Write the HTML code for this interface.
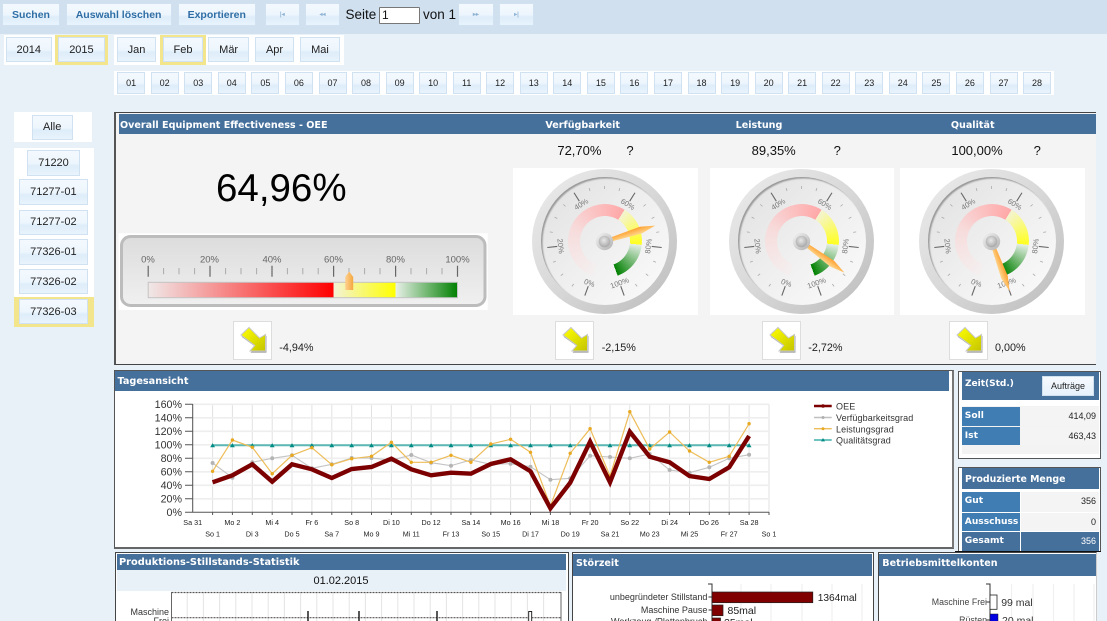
<!DOCTYPE html>
<html><head><meta charset="utf-8"><title>OEE</title>
<style>
html,body{margin:0;padding:0;width:1107px;height:621px;overflow:hidden;background:#e8f0f8;font-family:"Liberation Sans",sans-serif}
#p{position:relative;width:1107px;height:621px;overflow:hidden}
.a{position:absolute;box-sizing:border-box}
.w{position:absolute;background:#fff}
.hl{position:absolute;background:#f3e58b}
.b{position:absolute;box-sizing:border-box;display:flex;align-items:center;justify-content:center;border:1px solid #d0e2f2;background:linear-gradient(#f3f9fe 0,#eef6fd 50%,#deedfa 62%,#e8f3fc 100%);color:#222;font-size:11px;white-space:nowrap}
.n{font-weight:bold;color:#2f6ea5;font-size:10.5px}
.d{font-size:9px;width:28px;top:72px;height:21.5px}
.t{position:absolute;white-space:nowrap;line-height:14px;height:14px}
.c{transform:translateX(-50%)}
.h{position:absolute;background:#46709c}
.tt{position:absolute;white-space:nowrap;line-height:14px;height:14px;color:#fff;font:bold 9.6px/14px "DejaVu Sans",sans-serif}
.v{font-size:13px;color:#111}
.sm{font-size:10.8px;color:#222}
.ar{position:absolute;box-sizing:border-box;width:39px;height:39px;top:321px;background:#fff;border:1px solid #ddd}
.ar svg{position:absolute;left:0;top:0}
.g{position:absolute;width:145px;height:145px;top:168.8px;border-radius:50%;background:linear-gradient(135deg,#ececec 0,#d8d8d8 50%,#bcbcbc 100%)}
.f{position:absolute;left:8.5px;top:8.5px;width:128px;height:128px;border-radius:50%;background:linear-gradient(135deg,#e0e0e0 0,#efefef 50%,#fbfbfb 100%);box-shadow:inset 1.5px 1.5px 1.5px #999}
.r{position:absolute;left:35.5px;top:35.5px;width:74px;height:74px;border-radius:50%;background:conic-gradient(from -160deg,#f4efef 0deg,#f7dcdc 90deg,#ffa8a8 192deg,#f4f4d2 192deg,#ffff20 256deg,#e6efe6 256deg,#008000 320deg,transparent 320deg);-webkit-mask:radial-gradient(circle closest-side,transparent 67%,#000 68%);mask:radial-gradient(circle closest-side,transparent 67%,#000 68%)}
.g svg{position:absolute;left:0;top:0}
.g text{font-size:7.5px;fill:#777;text-anchor:middle}
.lab{position:absolute;box-sizing:border-box;left:962.3px;width:58px;background:#3f7db3;color:#fff;font:bold 9.1px/19px "DejaVu Sans",sans-serif;padding-left:2.5px;white-space:nowrap;overflow:hidden}
.val{position:absolute;box-sizing:border-box;left:1021px;width:78px;background:#f4f4f4;color:#222;font-size:9px;line-height:19px;text-align:right;padding-right:3px}
svg text{font-family:"Liberation Sans",sans-serif}
</style></head><body><div id="p">

<div class="a" style="left:0;top:0;width:1107px;height:34px;background:#d0e0ef"></div>
<div class="b n" style="left:2px;top:3px;width:58px;height:23px">Suchen</div>
<div class="b n" style="left:65.6px;top:3px;width:106px;height:23px">Auswahl löschen</div>
<div class="b n" style="left:177.5px;top:3px;width:78.5px;height:23px">Exportieren</div>
<div class="b n" style="left:264.5px;top:3px;width:35.5px;height:23px;font-size:6px;color:#8fb4d4">|◂</div>
<div class="b n" style="left:305px;top:3px;width:35px;height:23px;font-size:6px;color:#8fb4d4">◂◂</div>
<div class="t" style="left:345.5px;top:7.5px;font-size:13.5px;color:#111">Seite</div>
<div class="a" style="left:379px;top:7px;width:40.5px;height:17px;background:#fff;border:1px solid #777;border-radius:1px;font-size:12px;line-height:15px;padding-left:2px;color:#111">1</div>
<div class="t" style="left:423px;top:7.5px;font-size:13.5px;color:#111">von 1</div>
<div class="b n" style="left:457.7px;top:3px;width:36.3px;height:23px;font-size:6px;color:#8fb4d4">▸▸</div>
<div class="b n" style="left:499px;top:3px;width:35px;height:23px;font-size:6px;color:#8fb4d4">▸|</div>

<div class="w" style="left:3.5px;top:34.7px;width:104.5px;height:30.3px"></div>
<div class="hl" style="left:55.4px;top:35px;width:52.6px;height:30px"></div>
<div class="b" style="left:6px;top:37.3px;width:45.6px;height:25px">2014</div>
<div class="b" style="left:57.9px;top:37.3px;width:47.1px;height:25px">2015</div>

<div class="w" style="left:114.3px;top:34.7px;width:229.4px;height:30.3px"></div>
<div class="hl" style="left:160px;top:35px;width:46px;height:30px"></div>
<div class="b" style="left:117px;top:37.3px;width:39px;height:25px">Jan</div>
<div class="b" style="left:162.7px;top:37.3px;width:40.7px;height:25px">Feb</div>
<div class="b" style="left:208.3px;top:37.3px;width:40.7px;height:25px">Mär</div>
<div class="b" style="left:255px;top:37.3px;width:39px;height:25px">Apr</div>
<div class="b" style="left:300px;top:37.3px;width:40px;height:25px">Mai</div>

<div class="w" style="left:114.3px;top:70.7px;width:939.4px;height:24px"></div>
<div class="b d" style="left:117.2px">01</div>
<div class="b d" style="left:150.7px">02</div>
<div class="b d" style="left:184.3px">03</div>
<div class="b d" style="left:217.8px">04</div>
<div class="b d" style="left:251.4px">05</div>
<div class="b d" style="left:284.9px">06</div>
<div class="b d" style="left:318.5px">07</div>
<div class="b d" style="left:352px">08</div>
<div class="b d" style="left:385.6px">09</div>
<div class="b d" style="left:419.1px">10</div>
<div class="b d" style="left:452.7px">11</div>
<div class="b d" style="left:486.2px">12</div>
<div class="b d" style="left:519.8px">13</div>
<div class="b d" style="left:553.3px">14</div>
<div class="b d" style="left:586.9px">15</div>
<div class="b d" style="left:620.4px">16</div>
<div class="b d" style="left:654px">17</div>
<div class="b d" style="left:687.5px">18</div>
<div class="b d" style="left:721.1px">19</div>
<div class="b d" style="left:754.6px">20</div>
<div class="b d" style="left:788.2px">21</div>
<div class="b d" style="left:821.7px">22</div>
<div class="b d" style="left:855.3px">23</div>
<div class="b d" style="left:888.8px">24</div>
<div class="b d" style="left:922.4px">25</div>
<div class="b d" style="left:955.9px">26</div>
<div class="b d" style="left:989.5px">27</div>
<div class="b d" style="left:1023px">28</div>

<div class="w" style="left:14px;top:112px;width:78px;height:30px"></div>
<div class="b" style="left:31.7px;top:114.7px;width:41px;height:25.3px">Alle</div>
<div class="w" style="left:14px;top:148px;width:80px;height:149px"></div>
<div class="hl" style="left:14px;top:297px;width:80px;height:29.7px"></div>
<div class="b" style="left:27px;top:149.7px;width:53px;height:26px">71220</div>
<div class="b" style="left:18.7px;top:179.3px;width:69.3px;height:25.7px">71277-01</div>
<div class="b" style="left:18.7px;top:209.7px;width:69.3px;height:25px">71277-02</div>
<div class="b" style="left:18.7px;top:239.3px;width:69.3px;height:25.4px">77326-01</div>
<div class="b" style="left:18.7px;top:269.3px;width:69.3px;height:24.7px">77326-02</div>
<div class="b" style="left:18.7px;top:299.3px;width:69.3px;height:24.7px">77326-03</div>

<!-- OEE panel -->
<div class="a" style="left:114.3px;top:112.3px;width:982px;height:253px;background:#f4f4f4;border:1px solid #444;border-left:2px solid #555;border-right:0"></div>
<div class="h" style="left:118.7px;top:114px;width:977.3px;height:20px"></div>
<div class="tt" style="left:120px;top:118.5px">Overall Equipment Effectiveness - OEE</div>
<div class="tt c" style="left:582.7px;top:118.5px">Verfügbarkeit</div>
<div class="tt c" style="left:759px;top:118.5px">Leistung</div>
<div class="tt c" style="left:972.7px;top:118.5px">Qualität</div>

<div class="t" style="left:216px;top:168.5px;font-size:38.5px;line-height:40px;height:40px;color:#000">64,96%</div>
<div class="t v c" style="left:579.4px;top:144.2px">72,70%</div>
<div class="t v c" style="left:630px;top:144.2px">?</div>
<div class="t v c" style="left:773.7px;top:144.2px">89,35%</div>
<div class="t v c" style="left:837.3px;top:144.2px">?</div>
<div class="t v c" style="left:977px;top:144.2px">100,00%</div>
<div class="t v c" style="left:1037.3px;top:144.2px">?</div>

<!-- linear gauge -->
<svg class="a" style="left:0;top:0" width="1107" height="621">
<defs>
<linearGradient id="lf" x1="0" y1="0" x2="0" y2="1"><stop offset="0" stop-color="#dcdcdc"/><stop offset="1" stop-color="#f0f0f0"/></linearGradient>
<linearGradient id="lr" x1="0" x2="1"><stop offset="0" stop-color="#f0e8e8"/><stop offset="1" stop-color="#ff0000"/></linearGradient>
<linearGradient id="ly" x1="0" x2="1"><stop offset="0" stop-color="#f2f2d8"/><stop offset="1" stop-color="#ffff00"/></linearGradient>
<linearGradient id="lg" x1="0" x2="1"><stop offset="0" stop-color="#e8f0e8"/><stop offset="1" stop-color="#008000"/></linearGradient>
<linearGradient id="lm" x1="0" x2="1"><stop offset="0" stop-color="#ffd090"/><stop offset="1" stop-color="#f4a840"/></linearGradient>
</defs>
<rect x="118.7" y="233.3" width="369" height="76.7" fill="#fff"/>
<rect x="121.5" y="236.5" width="363.5" height="69" rx="9" fill="url(#lf)" stroke="#bcbcbc" stroke-width="3"/>
<rect x="148.2" y="282.3" width="185.4" height="15.4" fill="url(#lr)"/>
<rect x="333.6" y="282.3" width="62" height="15.4" fill="url(#ly)"/>
<rect x="395.6" y="282.3" width="62" height="15.4" fill="url(#lg)"/>
<rect x="148.2" y="282.3" width="309.3" height="15.4" fill="none" stroke="#c4c4c4"/>
<path d="M148.2 265.7V276.7M210 265.7V276.7M272 265.7V276.7M333.6 265.7V276.7M395.6 265.7V276.7M457.5 265.7V276.7" stroke="#666" stroke-width="1.2"/>
<path d="M163.6 268V274.3M179 268V274.3M194.6 268V274.3M225.6 268V274.3M241 268V274.3M256.6 268V274.3M287.4 268V274.3M302.8 268V274.3M318.2 268V274.3M349 268V274.3M364.6 268V274.3M380 268V274.3M411 268V274.3M426.6 268V274.3M442 268V274.3" stroke="#aaa" stroke-width="1"/>
<g font-size="9.5" fill="#666" text-anchor="middle">
<text x="148" y="262.5">0%</text><text x="209.5" y="262.5">20%</text><text x="272" y="262.5">40%</text><text x="333.5" y="262.5">60%</text><text x="395.5" y="262.5">80%</text><text x="457.5" y="262.5">100%</text>
</g>
<path d="M349.2 271.5L353.2 277V290H345.2V277Z" fill="url(#lm)"/>
</svg>

<!-- gauges -->
<div class="w" style="left:513px;top:167.5px;width:184.7px;height:147.5px"></div>
<div class="w" style="left:709.7px;top:167.5px;width:184.3px;height:147.5px"></div>
<div class="w" style="left:900px;top:167.5px;width:185px;height:147.5px"></div>

<svg width="0" height="0" style="position:absolute"><defs>
<linearGradient id="nd" gradientUnits="userSpaceOnUse" x1="-3.5" y1="0" x2="3.5" y2="0"><stop offset="0" stop-color="#ffa030"/><stop offset="1" stop-color="#ffd890"/></linearGradient>
<radialGradient id="hb" cx=".45" cy=".4" r=".6"><stop offset="0" stop-color="#e8e8e8"/><stop offset="1" stop-color="#a8a8a8"/></radialGradient>
<linearGradient id="hr" x1="0" y1="0" x2="1" y2="1"><stop offset="0" stop-color="#f4f4f4"/><stop offset="1" stop-color="#b0b0b0"/></linearGradient>
<g id="tk">
<g stroke="#666" stroke-width="1.1"><path d="M0-47.5V-57.5" transform="rotate(-160)"/><path d="M0-47.5V-57.5" transform="rotate(-96)"/><path d="M0-47.5V-57.5" transform="rotate(-32)"/><path d="M0-47.5V-57.5" transform="rotate(32)"/><path d="M0-47.5V-57.5" transform="rotate(96)"/><path d="M0-47.5V-57.5" transform="rotate(160)"/></g>
<g stroke="#aaa" stroke-width=".8"><path d="M0-52.5V-55.5" transform="rotate(-144)"/><path d="M0-52.5V-55.5" transform="rotate(-128)"/><path d="M0-52.5V-55.5" transform="rotate(-112)"/><path d="M0-52.5V-55.5" transform="rotate(-80)"/><path d="M0-52.5V-55.5" transform="rotate(-64)"/><path d="M0-52.5V-55.5" transform="rotate(-48)"/><path d="M0-52.5V-55.5" transform="rotate(-16)"/><path d="M0-52.5V-55.5"/><path d="M0-52.5V-55.5" transform="rotate(16)"/><path d="M0-52.5V-55.5" transform="rotate(48)"/><path d="M0-52.5V-55.5" transform="rotate(64)"/><path d="M0-52.5V-55.5" transform="rotate(80)"/><path d="M0-52.5V-55.5" transform="rotate(112)"/><path d="M0-52.5V-55.5" transform="rotate(128)"/><path d="M0-52.5V-55.5" transform="rotate(144)"/></g>
</g>
<g id="nh"><polygon points="-2,-7 2,-7 3.5,-38 0,-53 -3.5,-38" fill="url(#nd)"/></g>
<g id="hu"><circle r="8.7" fill="url(#hr)"/><circle r="5.8" fill="url(#hb)"/></g>
<linearGradient id="ay" x1="0" y1="0" x2="1" y2="1"><stop offset="0" stop-color="#ffff00"/><stop offset="1" stop-color="#c4c400"/></linearGradient>
<g id="arr"><polygon points="7,14 15,6 26,17 32,13 32,30 16,30 21,24" fill="#aaa" transform="translate(.5,.8)"/><polygon points="7,13 15,5.5 25.5,16 31.5,12.5 31.5,29 16,29 20.8,23.5" fill="url(#ay)" stroke="#c8c8c8" stroke-width="1"/></g>
</defs></svg>

<div class="g" style="left:532.3px"><div class="f"></div><div class="r"></div>
<svg width="145" height="145" viewBox="-72.5 -72.5 145 145"><use href="#tk"/>
<text transform="rotate(-160) translate(0,-44) rotate(180)" dy=".35em">0%</text><text transform="rotate(-96) translate(0,-44) rotate(180)" dy=".35em">20%</text><text transform="rotate(-32) translate(0,-44)" dy=".35em">40%</text><text transform="rotate(32) translate(0,-44)" dy=".35em">60%</text><text transform="rotate(96) translate(0,-44) rotate(180)" dy=".35em">80%</text><text transform="rotate(160) translate(0,-44) rotate(180)" dy=".35em">100%</text>
<use href="#nh" transform="rotate(72.6)"/><use href="#hu"/></svg></div>

<div class="g" style="left:729px"><div class="f"></div><div class="r"></div>
<svg width="145" height="145" viewBox="-72.5 -72.5 145 145"><use href="#tk"/>
<text transform="rotate(-160) translate(0,-44) rotate(180)" dy=".35em">0%</text><text transform="rotate(-96) translate(0,-44) rotate(180)" dy=".35em">20%</text><text transform="rotate(-32) translate(0,-44)" dy=".35em">40%</text><text transform="rotate(32) translate(0,-44)" dy=".35em">60%</text><text transform="rotate(96) translate(0,-44) rotate(180)" dy=".35em">80%</text><text transform="rotate(160) translate(0,-44) rotate(180)" dy=".35em">100%</text>
<use href="#nh" transform="rotate(125.9)"/><use href="#hu"/></svg></div>

<div class="g" style="left:919.3px"><div class="f"></div><div class="r"></div>
<svg width="145" height="145" viewBox="-72.5 -72.5 145 145"><use href="#tk"/>
<text transform="rotate(-160) translate(0,-44) rotate(180)" dy=".35em">0%</text><text transform="rotate(-96) translate(0,-44) rotate(180)" dy=".35em">20%</text><text transform="rotate(-32) translate(0,-44)" dy=".35em">40%</text><text transform="rotate(32) translate(0,-44)" dy=".35em">60%</text><text transform="rotate(96) translate(0,-44) rotate(180)" dy=".35em">80%</text><text transform="rotate(160) translate(0,-44) rotate(180)" dy=".35em">100%</text>
<use href="#nh" transform="rotate(160)"/><use href="#hu"/></svg></div>

<div class="ar" style="left:233.3px"><svg width="38" height="38"><use href="#arr"/></svg></div>
<div class="ar" style="left:555px"><svg width="38" height="38"><use href="#arr"/></svg></div>
<div class="ar" style="left:762px"><svg width="38" height="38"><use href="#arr"/></svg></div>
<div class="ar" style="left:948.7px"><svg width="38" height="38"><use href="#arr"/></svg></div>
<div class="t sm" style="left:279.3px;top:341px">-4,94%</div>
<div class="t sm" style="left:601.7px;top:341px">-2,15%</div>
<div class="t sm" style="left:808.3px;top:341px">-2,72%</div>
<div class="t sm" style="left:995px;top:341px">0,00%</div>

<!-- Tagesansicht -->
<div class="a" style="left:114px;top:369.5px;width:839.5px;height:179px;background:#fff;border:1px solid #555;border-bottom:2px solid #666;border-right:2px solid #777"></div>
<div class="h" style="left:115.3px;top:371px;width:834px;height:20px"></div>
<div class="tt" style="left:117.5px;top:375.3px;font-size:9.7px">Tagesansicht</div>

<svg class="a" style="left:0;top:0" width="1107" height="621">
<defs>
<marker id="mg" markerUnits="userSpaceOnUse" markerWidth="6" markerHeight="6" refX="3" refY="3"><circle cx="3" cy="3" r="2" fill="#b4b4b4"/></marker>
<marker id="mo" markerUnits="userSpaceOnUse" markerWidth="6" markerHeight="6" refX="3" refY="3"><circle cx="3" cy="3" r="1.7" fill="#e8a820"/></marker>
<marker id="mt" markerUnits="userSpaceOnUse" markerWidth="6" markerHeight="6" refX="3" refY="3"><polygon points="3,.8 5.4,5 .6,5" fill="#008b84"/></marker>
</defs>
<path d="M192.7 404.3V512M212.6 404.3V512M232.4 404.3V512M252.3 404.3V512M272.2 404.3V512M292 404.3V512M311.9 404.3V512M331.8 404.3V512M351.7 404.3V512M371.5 404.3V512M391.4 404.3V512M411.3 404.3V512M431.1 404.3V512M451 404.3V512M470.9 404.3V512M490.8 404.3V512M510.6 404.3V512M530.5 404.3V512M550.4 404.3V512M570.2 404.3V512M590.1 404.3V512M610 404.3V512M629.8 404.3V512M649.7 404.3V512M669.6 404.3V512M689.5 404.3V512M709.3 404.3V512M729.2 404.3V512M749.1 404.3V512M769 404.3V512" stroke="#e2e2e2" stroke-width="1" fill="none"/>
<path d="M192.7 404.3H769M192.7 417.8H769M192.7 431.3H769M192.7 444.8H769M192.7 458.3H769M192.7 471.8H769M192.7 485.3H769M192.7 498.8H769" stroke="#eeeeee" stroke-width="1.6" fill="none"/>
<path d="M192.7 404V512.3H769M185 404.3H192.7M185 417.8H192.7M185 431.3H192.7M185 444.8H192.7M185 458.3H192.7M185 471.8H192.7M185 485.3H192.7M185 498.8H192.7M185 512.3H192.7" stroke="#555" stroke-width="1" fill="none"/>
<path d="M212.6 512V515M232.4 512V515M252.3 512V515M272.2 512V515M292 512V515M311.9 512V515M331.8 512V515M351.7 512V515M371.5 512V515M391.4 512V515M411.3 512V515M431.1 512V515M451 512V515M470.9 512V515M490.8 512V515M510.6 512V515M530.5 512V515M550.4 512V515M570.2 512V515M590.1 512V515M610 512V515M629.8 512V515M649.7 512V515M669.6 512V515M689.5 512V515M709.3 512V515M729.2 512V515M749.1 512V515M769 512V515" stroke="#555" stroke-width="1" fill="none"/>
<g font-size="10.7" fill="#333" text-anchor="end">
<text x="182" y="408">160%</text><text x="182" y="421.6">140%</text><text x="182" y="435.1">120%</text><text x="182" y="448.6">100%</text><text x="182" y="462">80%</text><text x="182" y="475.6">60%</text><text x="182" y="489">40%</text><text x="182" y="502.6">20%</text><text x="182" y="516">0%</text>
</g>
<g style="font-family:'DejaVu Sans',sans-serif" font-size="7.2" fill="#222" text-anchor="middle">
<g font-family="DejaVu Sans">
<text x="192.7" y="524.8">Sa 31</text><text x="232.4" y="524.8">Mo 2</text><text x="272.2" y="524.8">Mi 4</text><text x="311.9" y="524.8">Fr 6</text><text x="351.7" y="524.8">So 8</text><text x="391.4" y="524.8">Di 10</text><text x="431.1" y="524.8">Do 12</text><text x="470.9" y="524.8">Sa 14</text><text x="510.6" y="524.8">Mo 16</text><text x="550.4" y="524.8">Mi 18</text><text x="590.1" y="524.8">Fr 20</text><text x="629.8" y="524.8">So 22</text><text x="669.6" y="524.8">Di 24</text><text x="709.3" y="524.8">Do 26</text><text x="749.1" y="524.8">Sa 28</text>
<text x="212.6" y="536.4">So 1</text><text x="252.3" y="536.4">Di 3</text><text x="292" y="536.4">Do 5</text><text x="331.8" y="536.4">Sa 7</text><text x="371.5" y="536.4">Mo 9</text><text x="411.3" y="536.4">Mi 11</text><text x="451" y="536.4">Fr 13</text><text x="490.8" y="536.4">So 15</text><text x="530.5" y="536.4">Di 17</text><text x="570.2" y="536.4">Do 19</text><text x="610" y="536.4">Sa 21</text><text x="649.7" y="536.4">Mo 23</text><text x="689.5" y="536.4">Mi 25</text><text x="729.2" y="536.4">Fr 27</text><text x="769" y="536.4">So 1</text>
</g></g>
<polyline fill="none" stroke="#5cb8b4" stroke-width="2" marker-start="url(#mt)" marker-mid="url(#mt)" marker-end="url(#mt)" points="212.6,445.3 232.4,445.3 252.3,445.3 272.2,445.3 292,445.3 311.9,445.3 331.8,445.3 351.7,445.3 371.5,445.3 391.4,445.3 411.3,445.3 431.1,445.3 451,445.3 470.9,445.3 490.8,445.3 510.6,445.3 530.5,445.3 550.4,445.3 570.2,445.3 590.1,445.3 610,445.3 629.8,445.3 649.7,445.3 669.6,445.3 689.5,445.3 709.3,445.3 729.2,445.3 749.1,445.3"/>
<polyline fill="none" stroke="#c4c4c4" stroke-width="1.1" marker-start="url(#mg)" marker-mid="url(#mg)" marker-end="url(#mg)" points="212.6,463 232.4,477.7 252.3,462.3 272.2,458.3 292,455.3 311.9,468.3 331.8,464.3 351.7,458 371.5,458 391.4,460.3 411.3,455 431.1,462.7 451,465.7 470.9,460 490.8,464.3 510.6,463.7 530.5,466.7 550.4,479.7 570.2,478.3 590.1,455.7 610,457 629.8,458.3 649.7,454 669.6,470 689.5,472.7 709.3,467.3 729.2,458.3 749.1,454.7"/>
<polyline fill="none" stroke="#eebd5a" stroke-width="1.2" marker-start="url(#mo)" marker-mid="url(#mo)" marker-end="url(#mo)" points="212.6,471.3 232.4,440 252.3,447.3 272.2,473.7 292,455.3 311.9,447.7 331.8,464.7 351.7,458.7 371.5,456.3 391.4,442.3 411.3,462.3 431.1,462.3 451,455.3 470.9,462.3 490.8,444 510.6,439.3 530.5,452.3 550.4,506 570.2,453.3 590.1,428.7 610,476 629.8,411.7 649.7,449 669.6,432 689.5,451 709.3,462.3 729.2,456.3 749.1,423.7"/>
<polyline fill="none" stroke="#7d0000" stroke-width="4.4" stroke-linejoin="miter" points="212.6,482.3 232.4,475.3 252.3,464.3 272.2,481.7 292,464.3 311.9,469.3 331.8,478 351.7,469 371.5,467 391.4,458.7 411.3,469.3 431.1,475.3 451,472.7 470.9,473.7 490.8,464 510.6,459.3 530.5,471.3 550.4,508.3 570.2,482.7 590.1,441.7 610,482.3 629.8,431.7 649.7,456.7 669.6,462.3 689.5,476 709.3,479 729.2,467.3 749.1,436"/>
<path d="M814 406H831.7" stroke="#7d0000" stroke-width="2.4"/><circle cx="823" cy="406" r="1.8" fill="#7d0000"/>
<path d="M814 417.5H831.7" stroke="#c0c0c0" stroke-width="1.4"/><circle cx="823" cy="417.5" r="1.5" fill="#b0b0b0"/>
<path d="M814 428.7H831.7" stroke="#eebd5a" stroke-width="1.4"/><circle cx="823" cy="428.7" r="1.5" fill="#e8a820"/>
<path d="M814 440H831.7" stroke="#3fb0aa" stroke-width="1.4"/><polygon points="823,438 825,441.4 821,441.4" fill="#008b84"/>
<g font-size="9" fill="#333" letter-spacing=".1">
<text x="836" y="409.5">OEE</text><text x="836" y="421">Verfügbarkeitsgrad</text><text x="836" y="432.3">Leistungsgrad</text><text x="836" y="443.3">Qualitätsgrad</text>
</g>
</svg>

<!-- Zeit -->
<div class="a" style="left:958.3px;top:371px;width:142.7px;height:87.5px;background:#fff;border:1px solid #555"></div>
<div class="h" style="left:962.3px;top:372.3px;width:137px;height:27.4px"></div>
<div class="tt" style="left:965px;top:376.5px;font-size:9px">Zeit(Std.)</div>
<div class="b" style="left:1042.3px;top:375.7px;width:51.4px;height:20px;font-size:9px;background:linear-gradient(#f6fafe,#e6f1fb);border-color:#cfe0ef">Aufträge</div>
<div class="a" style="left:962.3px;top:405.5px;width:137px;height:48px;background:#f3f3f3"></div>
<div class="lab" style="top:406.7px;height:19px">Soll</div><div class="val" style="top:406.7px;height:19px">414,09</div>
<div class="lab" style="top:426.7px;height:18.3px">Ist</div><div class="val" style="top:426.7px;height:18.3px">463,43</div>

<!-- Produzierte -->
<div class="a" style="left:958.3px;top:466.7px;width:142.7px;height:85px;background:#fff;border:1px solid #555"></div>
<div class="h" style="left:962.3px;top:468px;width:137px;height:21px"></div>
<div class="tt" style="left:965px;top:472.8px;font-size:9.4px">Produzierte Menge</div>
<div class="lab" style="top:492.3px;height:19.4px">Gut</div><div class="val" style="top:492.3px;height:19.4px">356</div>
<div class="lab" style="top:512.7px;height:18.3px">Ausschuss</div><div class="val" style="top:512.7px;height:18.3px">0</div>
<div class="lab" style="top:532.3px;height:19px;background:#46709c">Gesamt</div><div class="val" style="top:532.3px;height:19px;background:#46709c;color:#fff">356</div>
<div class="a" style="left:955px;top:551px;width:146px;height:1px;background:#111"></div>

<!-- Produktions -->
<div class="a" style="left:114.7px;top:552.3px;width:454px;height:70px;background:#fff;border:1px solid #444"></div>
<div class="h" style="left:116.7px;top:553.7px;width:449.3px;height:16.7px"></div>
<div class="tt" style="left:119px;top:556px;font-size:9.8px">Produktions-Stillstands-Statistik</div>
<div class="a" style="left:116.7px;top:570.4px;width:449.3px;height:21px;background:#e8f0f8"></div>
<div class="t c" style="left:341px;top:573.7px;font-size:11px;color:#111">01.02.2015</div>

<!-- Störzeit -->
<div class="a" style="left:572px;top:552.3px;width:301.5px;height:70px;background:#fff;border:1px solid #444"></div>
<div class="h" style="left:573.3px;top:553.7px;width:299px;height:22px"></div>
<div class="tt" style="left:576px;top:556.5px">Störzeit</div>

<!-- Betrieb -->
<div class="a" style="left:877.8px;top:552.3px;width:219px;height:70px;background:#fff;border:1px solid #444;border-right:1px solid #ccc"></div>
<div class="h" style="left:879px;top:553.7px;width:217px;height:22px"></div>
<div class="tt" style="left:882.3px;top:556.5px">Betriebsmittelkonten</div>

<svg class="a" style="left:0;top:0" width="1107" height="621">
<path d="M187.2 592V621M203.4 592V621M219.6 592V621M235.8 592V621M252 592V621M268.2 592V621M284.4 592V621M300.6 592V621M316.8 592V621M333 592V621M349.2 592V621M365.4 592V621M381.6 592V621M397.8 592V621M414 592V621M430.2 592V621M446.4 592V621M462.6 592V621M478.8 592V621M495 592V621M511.2 592V621M527.4 592V621M543.6 592V621" stroke="#e4e4e4"/>
<path d="M171.5 592.5H561M171.5 617.7H561" stroke="#555" stroke-width="1.2" stroke-dasharray="2 1" fill="none"/>
<path d="M171.5 592V621M561 592V621" stroke="#666" fill="none"/>
<path d="M308 611V621M359 611V621M437 611V621" stroke="#111" stroke-width="1.4"/>
<rect x="528.7" y="611.5" width="3" height="10" fill="#fff" stroke="#111" stroke-width=".9"/>
<g font-size="9" fill="#333" text-anchor="end"><text x="169" y="615">Maschine</text><text x="169" y="624">Frei</text></g>

<path d="M741 584V621M771 584V621M802 584V621M832 584V621M862 584V621" stroke="#eee"/>
<path d="M708 584H712V621M708.5 597H712M708.5 610H712" stroke="#333" fill="none"/>
<rect x="712" y="592" width="100.8" height="10.7" fill="#800000" stroke="#222" stroke-width=".7"/>
<rect x="712" y="605" width="11" height="10.7" fill="#800000" stroke="#222" stroke-width=".7"/>
<rect x="712" y="618" width="8.5" height="10" fill="#800000" stroke="#222" stroke-width=".7"/>
<g font-size="9" fill="#333" text-anchor="end"><text x="707.4" y="600">unbegründeter Stillstand</text><text x="707.4" y="613">Maschine Pause</text><text x="707.4" y="624.5">Werkzeug-/Plattenbruch</text></g>
<g font-size="10.2" fill="#222"><text x="817.7" y="601">1364mal</text></g>
<g font-size="10.5" fill="#222"><text x="727.5" y="614">85mal</text><text x="724" y="626">25mal</text></g>

<path d="M1011.6 584V621M1033 584V621M1053.6 584V621M1074 584V621M1094 584V621" stroke="#eee"/>
<path d="M986 584H990V621M986.5 602H990M986.5 620H990" stroke="#333" fill="none"/>
<rect x="990" y="595" width="7" height="14.3" fill="#fff" stroke="#222" stroke-width=".8"/>
<rect x="990" y="614" width="8" height="10" fill="#0000e0" stroke="#222" stroke-width=".5"/>
<g font-size="8.8" fill="#444" text-anchor="end"><text x="987" y="605">Maschine Frei</text><text x="987" y="623">Rüsten</text></g>
<g font-size="10.5" fill="#333"><text x="1001.2" y="606">99 mal</text><text x="1002" y="624">20 mal</text></g>
</svg>

</div></body></html>
